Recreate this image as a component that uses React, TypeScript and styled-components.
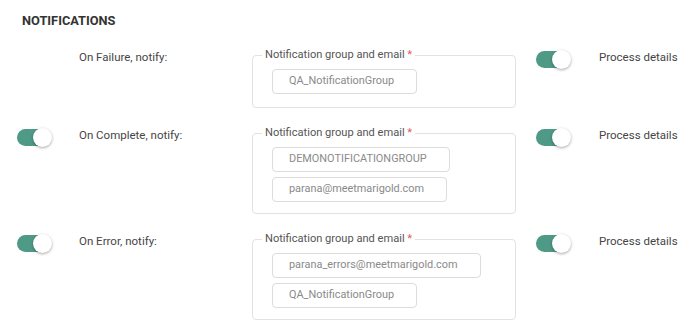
import React from "react";
import styled, { createGlobalStyle } from "styled-components";

const Global = createGlobalStyle`
  html, body { margin: 0; padding: 0; background: #fff; }
  body { font-family: Roboto, "Noto Sans", Arial, sans-serif; }
`;

const Page = styled.div`
  padding: 14px 0 0 17px;
  width: 700px;
  box-sizing: border-box;
`;

const Title = styled.h2`
  margin: 0 0 20px 5px;
  font-size: 12.8px;
  line-height: 14px;
  font-weight: 700;
  color: #333;
`;

const Grid = styled.div`
  display: grid;
  grid-template-columns: 62px 173px 264px 83px auto;
  row-gap: 18px;
  align-items: start;
`;

const Cell = styled.div<{ $pl?: number }>`
  padding-top: 2px;
  padding-left: ${(p) => p.$pl ?? 0}px;
  display: flex;
`;

const Label = styled.span`
  font-size: 11.5px;
  line-height: 14px;
  color: #454545;
`;

const Track = styled.span<{ $on: boolean }>`
  position: relative;
  display: inline-block;
  width: 34px;
  height: 17px;
  margin-top: 1px;
  border-radius: 9px;
  background: ${(p) => (p.$on ? "#4f9a87" : "#ccc")};
`;

const Knob = styled.span<{ $on: boolean }>`
  position: absolute;
  top: -1px;
  left: ${(p) => (p.$on ? "16px" : "0")};
  width: 19px;
  height: 19px;
  border-radius: 50%;
  background: #fff;
  box-shadow: 0 1px 3px rgba(0, 0, 0, 0.35);
`;

const Field = styled.fieldset<{ $single: boolean }>`
  margin: 0;
  padding: 7px 18px ${(p) => (p.$single ? 13 : 11)}px 19px;
  border: 1px solid #e2e2e2;
  border-radius: 4px;
  min-width: 0;
  display: flex;
  flex-direction: column;
  align-items: flex-start;
  gap: 5px;
`;

const Legend = styled.legend`
  font-size: 11.1px;
  line-height: 14px;
  color: #555;
  padding: 0 3px;
  margin-left: -10px;
`;

const Req = styled.span`
  color: #e4585a;
`;

const Chip = styled.div`
  box-sizing: border-box;
  height: 25px;
  padding: 0 22px 0 16px;
  border: 1.5px solid #dcdcdc;
  border-radius: 4px;
  font-size: 10.9px;
  line-height: 22px;
  color: #8a8a8a;
  white-space: nowrap;
`;

const Toggle = ({ on }: { on: boolean }) => (
  <Track $on={on}>
    <Knob $on={on} />
  </Track>
);

type Row = { toggle: boolean; label: string; items: string[] };

const rows: Row[] = [
  { toggle: false, label: "On Failure, notify:", items: ["QA_NotificationGroup"] },
  {
    toggle: true,
    label: "On Complete, notify:",
    items: ["DEMONOTIFICATIONGROUP", "parana@meetmarigold.com"],
  },
  {
    toggle: true,
    label: "On Error, notify:",
    items: ["parana_errors@meetmarigold.com", "QA_NotificationGroup"],
  },
];

export default function App() {
  return (
    <>
      <Global />
      <Page>
        <Title>NOTIFICATIONS</Title>
        <Grid>
          {rows.map((r) => (
            <React.Fragment key={r.label}>
              <Cell>{r.toggle && <Toggle on />}</Cell>
              <Cell>
                <Label>{r.label}</Label>
              </Cell>
              <Field $single={r.items.length === 1}>
                <Legend>
                  Notification group and email <Req>*</Req>
                </Legend>
                {r.items.map((it) => (
                  <Chip key={it}>{it}</Chip>
                ))}
              </Field>
              <Cell $pl={20}>
                <Toggle on />
              </Cell>
              <Cell>
                <Label>Process details</Label>
              </Cell>
            </React.Fragment>
          ))}
        </Grid>
      </Page>
    </>
  );
}
